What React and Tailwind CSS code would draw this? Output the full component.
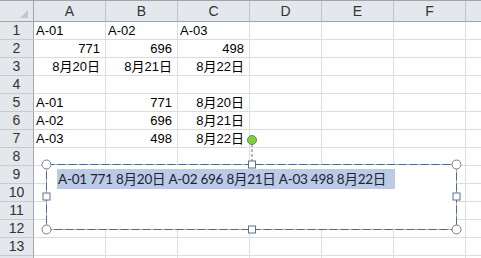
import React from "react";

const cols = ["A", "B", "C", "D", "E", "F", ""];

const cells = {
    1: { A: ["A-01", "l"], B: ["A-02", "l"], C: ["A-03", "l"] },
    2: { A: ["771", "r"], B: ["696", "r"], C: ["498", "r"] },
    3: { A: ["8月20日", "r"], B: ["8月21日", "r"], C: ["8月22日", "r"] },
    5: { A: ["A-01", "l"], B: ["771", "r"], C: ["8月20日", "r"] },
    6: { A: ["A-02", "l"], B: ["696", "r"], C: ["8月21日", "r"] },
    7: { A: ["A-03", "l"], B: ["498", "r"], C: ["8月22日", "r"] },
};

const rows = Array.from({ length: 14 }, (_, i) => i + 1);

function Cell({ value }) {
    if (!value) {
        return <div className="border-r border-b border-[#dadcdd]" />;
    }
    const [text, align] = value;
    return (
        <div
            className={
                "flex items-end overflow-visible whitespace-nowrap border-r border-b border-[#dadcdd] leading-[17px] " +
                (align === "r" ? "justify-end pr-[5px]" : "pl-[2px]")
            }
        >
            {text}
        </div>
    );
}

function SelectionFrame() {
    // text box outline with its handles, drawn over the sheet
    return (
        <svg className="absolute left-0 top-0" width="481" height="258">
            <line x1="252" y1="144" x2="252" y2="161" stroke="#5c7390" strokeDasharray="3 2" />
            <rect x="46.5" y="164.5" width="410" height="65" fill="white" stroke="#b4b8bd" />
            <rect x="46.5" y="164.5" width="410" height="65" fill="none" stroke="#50698a" strokeDasharray="8 3" />
            <circle cx="252" cy="140" r="4.5" fill="#7fd03c" stroke="#6c8060" />
            <circle cx="46.5" cy="164.5" r="4.5" fill="white" stroke="#7a7a7a" />
            <circle cx="456.5" cy="164.5" r="4.5" fill="white" stroke="#7a7a7a" />
            <circle cx="46.5" cy="229.5" r="4.5" fill="white" stroke="#7a7a7a" />
            <circle cx="456.5" cy="229.5" r="4.5" fill="white" stroke="#7a7a7a" />
            <rect x="248.5" y="161" width="7" height="7" fill="white" stroke="#5c7390" />
            <rect x="248.5" y="226" width="7" height="7" fill="white" stroke="#5c7390" />
            <rect x="43" y="193" width="7" height="7" fill="white" stroke="#5c7390" />
            <rect x="453" y="193" width="7" height="7" fill="white" stroke="#5c7390" />
        </svg>
    );
}

export default function App() {
    return (
        <div
            className="relative h-[258px] w-[481px] overflow-hidden bg-white text-[13px] text-black"
            style={{ fontFamily: '"Liberation Sans", "Noto Sans CJK JP", sans-serif' }}
        >
            <div className="grid grid-cols-[34px_repeat(7,72px)] grid-rows-[21px_repeat(14,18px)] border-t border-[#a0a5ab]">
                <div className="relative border-r border-b border-[#9fa5ad] bg-[#e4e7eb]">
                    <div className="absolute right-[5px] bottom-[3px] h-0 w-0 border-b-[8px] border-l-[8px] border-b-[#c3c7cc] border-l-transparent" />
                </div>
                {cols.map((c, i) => (
                    <div
                        key={i}
                        className="flex items-center justify-center border-r border-b border-r-[#bdc2c9] border-b-[#9fa5ad] bg-[#e4e7eb] text-[14px] text-[#333] leading-none"
                    >
                        {c}
                    </div>
                ))}
                {rows.map((r) => (
                    <React.Fragment key={r}>
                        <div className="flex items-end justify-center border-r border-b border-r-[#9fa5ad] border-b-[#c6cbd2] bg-[#e4e7eb] text-[14px] leading-[17px] text-[#333]">
                            {r < 14 ? r : ""}
                        </div>
                        {cols.map((c, i) => (
                            <Cell key={i} value={cells[r] && cells[r][c]} />
                        ))}
                    </React.Fragment>
                ))}
            </div>

            <SelectionFrame />

            <div
                className="absolute left-[57px] top-[169px] flex h-[20px] w-[338px] items-center whitespace-nowrap bg-[#bccbe3] pl-[1px] text-[13.5px] tracking-[-0.25px] text-[#17233a]"
                style={{ fontFamily: 'Lato, "Noto Sans CJK JP", sans-serif' }}
            >
                A-01 771 8月20日 A-02 696 8月21日 A-03 498 8月22日
            </div>
        </div>
    );
}
